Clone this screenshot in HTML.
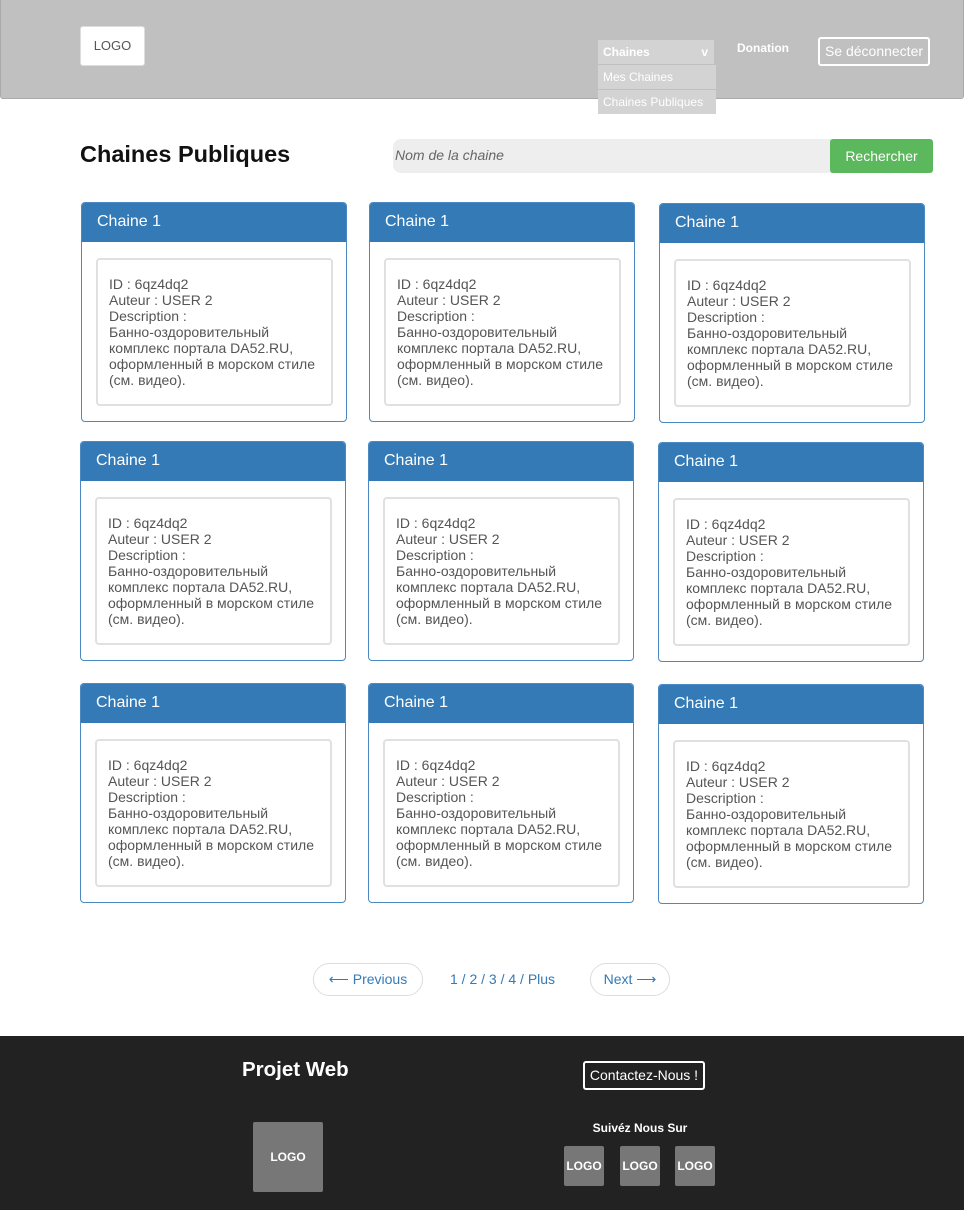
<!DOCTYPE html>
<html><head><meta charset="utf-8"><style>
*{box-sizing:border-box;margin:0;padding:0}
body{width:964px;height:1210px;position:relative;background:#fff;font-family:"Liberation Sans",Arial,sans-serif;overflow:hidden}
.a{position:absolute}
.hdr{left:0;top:0;width:964px;height:99px;background:#c0c0c0;border:1px solid #aaa;border-top:none;border-radius:0 0 3px 3px}
.logo{left:80px;top:26px;width:65px;height:40px;background:#fff;border:1px solid #ddd;border-radius:3px;font-size:13px;color:#555;text-align:center;line-height:38px}
.dd{background:#d3d3d3;color:#fff;font-size:12px;padding-left:5px;line-height:24px}
.card{width:266px;height:220px;border:1px solid #4a89c2;border-radius:4px;overflow:hidden}
.card .h{height:39px;background:#337ab7;color:#fff;font-size:16px;padding:10px 0 0 15px}
.card .b{position:absolute;left:14px;top:55px;width:237px;height:148px;border:2px solid #e0e0e0;border-radius:4px;padding:16px 0 0 11px;font-size:14px;line-height:16px;color:#555}
.ft{left:0;top:1036px;width:964px;height:174px;background:#222}
.gl{background:#777;color:#fff;font-weight:bold;font-size:12px;text-align:center;border-radius:2px}
.pg{height:33px;border:1px solid #ddd;border-radius:17px;color:#337ab7;font-size:14px;text-align:center;line-height:31px}
</style></head><body>
<div class="a hdr"></div>
<div class="a logo">LOGO</div>
<div class="a dd" style="left:598px;top:40px;width:116px;height:24px;font-weight:bold">Chaines<span style="position:absolute;right:6px">v</span></div>
<div class="a dd" style="left:598px;top:65px;width:118px;height:24px">Mes Chaines</div>
<div class="a dd" style="left:598px;top:90px;width:118px;height:24px">Chaines Publiques</div>
<div class="a" style="left:737px;top:41px;color:#fff;font-size:12px;font-weight:bold">Donation</div>
<div class="a" style="left:818px;top:37px;width:112px;height:29px;border:2px solid #fff;border-radius:3px;color:#fff;font-size:14px;text-align:center;line-height:25px">Se déconnecter</div>

<div class="a" style="left:80px;top:141px;font-size:23.5px;font-weight:bold;color:#111">Chaines Publiques</div>
<div class="a" style="left:393px;top:139px;width:450px;height:34px;background:#eee;border-radius:8px 0 0 8px;font-size:14px;font-style:italic;color:#666;padding:8px 0 0 2px">Nom de la chaine</div>
<div class="a" style="left:830px;top:139px;width:103px;height:34px;background:#5cb85c;border-radius:3px;color:#fff;font-size:14px;text-align:center;line-height:34px">Rechercher</div>

<div class="a card" style="left:81px;top:202px"><div class="h">Chaine 1</div><div class="b">ID : 6qz4dq2<br>Auteur : USER 2<br>Description :<br>Банно-оздоровительный комплекс портала DA52.RU, оформленный в морском стиле (см. видео).</div></div>
<div class="a card" style="left:369px;top:202px"><div class="h">Chaine 1</div><div class="b">ID : 6qz4dq2<br>Auteur : USER 2<br>Description :<br>Банно-оздоровительный комплекс портала DA52.RU, оформленный в морском стиле (см. видео).</div></div>
<div class="a card" style="left:659px;top:203px"><div class="h">Chaine 1</div><div class="b">ID : 6qz4dq2<br>Auteur : USER 2<br>Description :<br>Банно-оздоровительный комплекс портала DA52.RU, оформленный в морском стиле (см. видео).</div></div>
<div class="a card" style="left:80px;top:441px"><div class="h">Chaine 1</div><div class="b">ID : 6qz4dq2<br>Auteur : USER 2<br>Description :<br>Банно-оздоровительный комплекс портала DA52.RU, оформленный в морском стиле (см. видео).</div></div>
<div class="a card" style="left:368px;top:441px"><div class="h">Chaine 1</div><div class="b">ID : 6qz4dq2<br>Auteur : USER 2<br>Description :<br>Банно-оздоровительный комплекс портала DA52.RU, оформленный в морском стиле (см. видео).</div></div>
<div class="a card" style="left:658px;top:442px"><div class="h">Chaine 1</div><div class="b">ID : 6qz4dq2<br>Auteur : USER 2<br>Description :<br>Банно-оздоровительный комплекс портала DA52.RU, оформленный в морском стиле (см. видео).</div></div>
<div class="a card" style="left:80px;top:683px"><div class="h">Chaine 1</div><div class="b">ID : 6qz4dq2<br>Auteur : USER 2<br>Description :<br>Банно-оздоровительный комплекс портала DA52.RU, оформленный в морском стиле (см. видео).</div></div>
<div class="a card" style="left:368px;top:683px"><div class="h">Chaine 1</div><div class="b">ID : 6qz4dq2<br>Auteur : USER 2<br>Description :<br>Банно-оздоровительный комплекс портала DA52.RU, оформленный в морском стиле (см. видео).</div></div>
<div class="a card" style="left:658px;top:684px"><div class="h">Chaine 1</div><div class="b">ID : 6qz4dq2<br>Auteur : USER 2<br>Description :<br>Банно-оздоровительный комплекс портала DA52.RU, оформленный в морском стиле (см. видео).</div></div>

<div class="a pg" style="left:313px;top:963px;width:110px">⟵ Previous</div>
<div class="a" style="left:450px;top:971px;color:#337ab7;font-size:14px">1 / 2 / 3 / 4 / Plus</div>
<div class="a pg" style="left:590px;top:963px;width:80px">Next ⟶</div>

<div class="a ft"></div>
<div class="a" style="left:242px;top:1058px;color:#fff;font-size:20.5px;font-weight:bold">Projet Web</div>
<div class="a" style="left:583px;top:1061px;width:122px;height:29px;border:2px solid #fff;border-radius:3px;color:#fff;font-size:14px;text-align:center;line-height:25px">Contactez-Nous !</div>
<div class="a gl" style="left:253px;top:1122px;width:70px;height:70px;line-height:70px">LOGO</div>
<div class="a" style="left:560px;top:1121px;width:160px;text-align:center;color:#fff;font-size:12px;font-weight:bold">Suivéz Nous Sur</div>
<div class="a gl" style="left:564px;top:1146px;width:40px;height:40px;line-height:40px">LOGO</div>
<div class="a gl" style="left:620px;top:1146px;width:40px;height:40px;line-height:40px">LOGO</div>
<div class="a gl" style="left:675px;top:1146px;width:40px;height:40px;line-height:40px">LOGO</div>
</body></html>
